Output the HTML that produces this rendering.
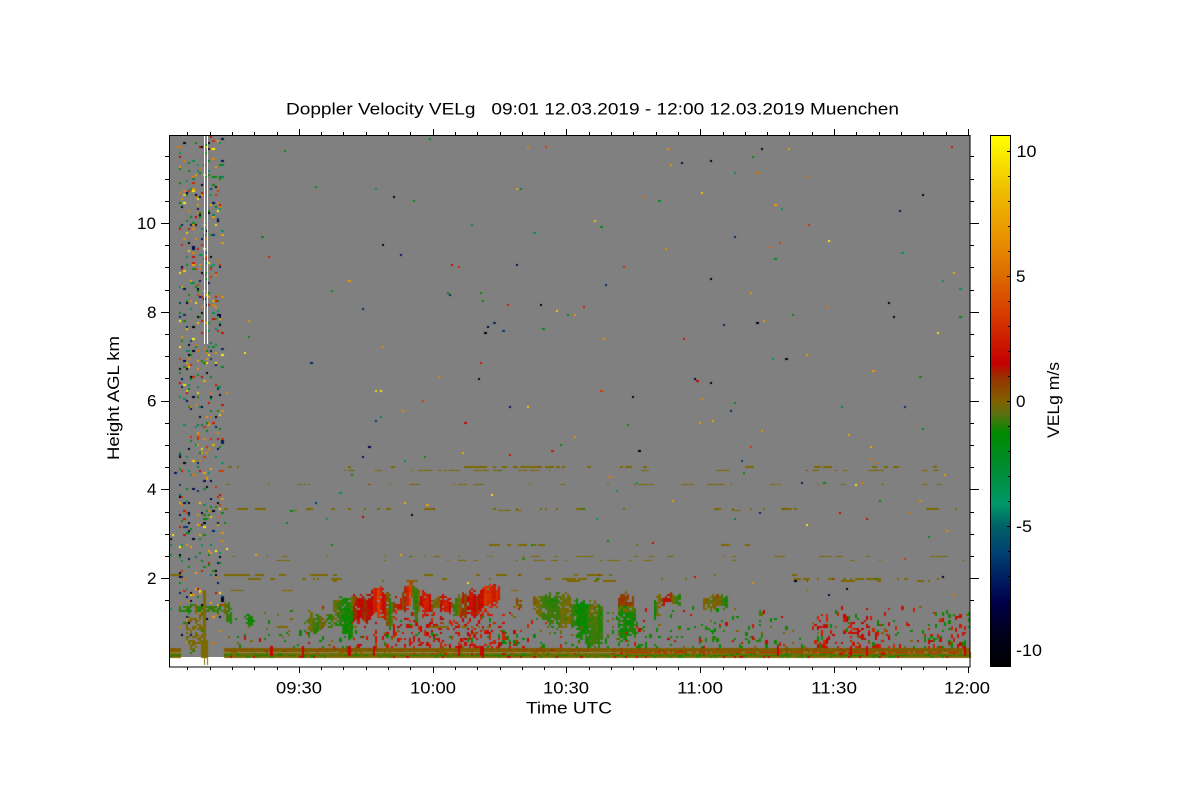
<!DOCTYPE html>
<html>
<head>
<meta charset="utf-8">
<title>Doppler Velocity VELg</title>
<style>
html,body{margin:0;padding:0;background:#fff;}
#w{position:relative;width:1200px;height:800px;overflow:hidden;background:#fff;}
#g{position:absolute;left:170px;top:136px;width:800px;height:521px;background:#808080;}
canvas{position:absolute;left:0;top:0;}
svg{position:absolute;left:0;top:0;}
text{font-family:"Liberation Sans",sans-serif;fill:#000;}
</style>
</head>
<body>
<div id="w">
<div id="g"></div>
<canvas id="c" width="1200" height="800"></canvas>
<svg id="s" width="1200" height="800" viewBox="0 0 1200 800">
<defs>
<linearGradient id="cb" x1="0" y1="0" x2="0" y2="1">
<stop offset="0" stop-color="#ffff00"/>
<stop offset="0.115" stop-color="#eeb800"/>
<stop offset="0.197" stop-color="#e89000"/>
<stop offset="0.265" stop-color="#dc6a00"/>
<stop offset="0.329" stop-color="#d84000"/>
<stop offset="0.429" stop-color="#c40000"/>
<stop offset="0.455" stop-color="#983000"/>
<stop offset="0.5" stop-color="#806000"/>
<stop offset="0.523" stop-color="#5f7010"/>
<stop offset="0.56" stop-color="#008a00"/>
<stop offset="0.625" stop-color="#008c30"/>
<stop offset="0.693" stop-color="#009868"/>
<stop offset="0.736" stop-color="#006068"/>
<stop offset="0.787" stop-color="#004070"/>
<stop offset="0.838" stop-color="#001a60"/>
<stop offset="0.881" stop-color="#000048"/>
<stop offset="0.938" stop-color="#00001c"/>
<stop offset="1" stop-color="#000000"/>
</linearGradient>
</defs>
<rect x="204" y="135" width="1" height="209" fill="#fff"/>
<rect x="207" y="135" width="1" height="209" fill="#fff"/>
<rect x="990.5" y="135.5" width="20" height="531" fill="url(#cb)" stroke="#000" stroke-width="1" shape-rendering="crispEdges"/>
<rect x="169.5" y="135.5" width="800.5" height="531.5" fill="none" stroke="#000" stroke-width="1" shape-rendering="crispEdges"/>
<g id="t" stroke="#000" stroke-width="1" shape-rendering="crispEdges"></g>

<text x="286" y="114.5" font-size="17" textLength="613" lengthAdjust="spacingAndGlyphs" xml:space="preserve">Doppler Velocity VELg   09:01 12.03.2019 - 12:00 12.03.2019 Muenchen</text>

<text x="276" y="693.5" font-size="16.5" textLength="46" lengthAdjust="spacingAndGlyphs">09:30</text>
<text x="410" y="693.5" font-size="16.5" textLength="46" lengthAdjust="spacingAndGlyphs">10:00</text>
<text x="543" y="693.5" font-size="16.5" textLength="46" lengthAdjust="spacingAndGlyphs">10:30</text>
<text x="677" y="693.5" font-size="16.5" textLength="46" lengthAdjust="spacingAndGlyphs">11:00</text>
<text x="811" y="693.5" font-size="16.5" textLength="46" lengthAdjust="spacingAndGlyphs">11:30</text>
<text x="944" y="693.5" font-size="16.5" textLength="46" lengthAdjust="spacingAndGlyphs">12:00</text>
<text x="526" y="713.5" font-size="17" textLength="86" lengthAdjust="spacingAndGlyphs">Time UTC</text>

<text x="137" y="229" font-size="16.5" textLength="19" lengthAdjust="spacingAndGlyphs">10</text>
<text x="147" y="318" font-size="16.5" textLength="9.5" lengthAdjust="spacingAndGlyphs">8</text>
<text x="147" y="406.5" font-size="16.5" textLength="9.5" lengthAdjust="spacingAndGlyphs">6</text>
<text x="147" y="495" font-size="16.5" textLength="9.5" lengthAdjust="spacingAndGlyphs">4</text>
<text x="147" y="584" font-size="16.5" textLength="9.5" lengthAdjust="spacingAndGlyphs">2</text>

<text transform="translate(119,460) rotate(-90)" font-size="17" textLength="124" lengthAdjust="spacingAndGlyphs">Height AGL km</text>
<text transform="translate(1059,438) rotate(-90)" font-size="17" textLength="76" lengthAdjust="spacingAndGlyphs">VELg m/s</text>

<text x="1016.5" y="157" font-size="16.5" textLength="20" lengthAdjust="spacingAndGlyphs">10</text>
<text x="1016" y="282" font-size="16.5" textLength="9.5" lengthAdjust="spacingAndGlyphs">5</text>
<text x="1016" y="407" font-size="16.5" textLength="9.5" lengthAdjust="spacingAndGlyphs">0</text>
<text x="1016" y="532" font-size="16.5" textLength="16" lengthAdjust="spacingAndGlyphs">-5</text>
<text x="1016" y="656" font-size="16.5" textLength="26" lengthAdjust="spacingAndGlyphs">-10</text>
</svg>
</div>
<script>
(function(){
var NS="http://www.w3.org/2000/svg",T=document.getElementById("t");
function L(a,b,c,d){var l=document.createElementNS(NS,"line");l.setAttribute("x1",a);l.setAttribute("y1",b);l.setAttribute("x2",c);l.setAttribute("y2",d);T.appendChild(l);}
var i,x,y;
for(i=0;i<36;i++){x=Math.round(187.3+22.3*i)+.5;var M=(i%6==5);
 L(x,135,x,M?129:132);L(x,667,x,M?673:670);}
for(i=-3;i<21;i++){y=Math.round(156.4+22.2*i)+.5;if(y<136||y>666)continue;var m=((i-3)%4==0);
 L(169,y,m?161:165,y);L(970,y,m?979:974,y);}
for(i=0;i<21;i++){y=151.5+25*i;L(1010,y,(i%5==0)?1007:1008,y);}

var s=20190312;
function R(){s|=0;s=s+0x6D2B79F5|0;var t=Math.imul(s^s>>>15,1|s);t=t+Math.imul(t^t>>>7,61|t)^t;return((t^t>>>14)>>>0)/4294967296;}
var C=document.getElementById("c").getContext("2d");
var st=[[10.6,255,255,0],[8.16,238,184,0],[6.44,232,144,0],[5,220,106,0],[3.64,216,64,0],[1.52,196,0,0],[.96,152,48,0],[.3,130,88,0],[0,124,106,0],[-.48,95,112,16],[-1.28,0,138,0],[-2.64,0,140,48],[-4.08,0,152,104],[-5,0,96,104],[-6.08,0,64,112],[-7.16,0,26,96],[-8.08,0,0,72],[-9.28,0,0,28],[-10.6,0,0,0]];
function col(v){
 if(v>=10.6)return"rgb(255,255,0)";
 for(var k=0;k<st.length-1;k++){if(v<=st[k][0]&&v>=st[k+1][0]){var a=st[k],b=st[k+1],f=(a[0]-v)/(a[0]-b[0]);
  return"rgb("+Math.round(a[1]+(b[1]-a[1])*f)+","+Math.round(a[2]+(b[2]-a[2])*f)+","+Math.round(a[3]+(b[3]-a[3])*f)+")";}}
 return"#000";
}
var DX=2.23;
function P(x,y,v,h){
 h=h||2;
 var n=Math.floor((x-170)/DX),xx=Math.round(170+n*DX),x2=Math.round(170+(n+1)*DX);
 var yy=136+2*Math.floor((y-136)/2);
 if(xx<170||xx>968||yy<136)return;
 C.fillStyle=col(v);C.fillRect(xx,yy,Math.min(x2,970)-xx,h);
}
function itp(tb,x,k){
 k=k||1;
 if(x<=tb[0][0])return tb[0][k];
 for(var j=0;j<tb.length-1;j++){if(x<=tb[j+1][0]){var f=(x-tb[j][0])/(tb[j+1][0]-tb[j][0]);return tb[j][k]+(tb[j+1][k]-tb[j][k])*f;}}
 return tb[tb.length-1][k];
}
function spk(){
 var r=R();
 if(r<.1)return 8.5+R()*2;
 if(r<.34)return 5+R()*2.6;
 if(r<.48)return 1.5+R()*2;
 if(r<.66)return -.9-R()*1.5;
 if(r<.76)return -3-R()*1.6;
 if(r<.9)return -6-R()*2;
 return -9-R()*1.5;
}
function band(y,segs,th,v0){
 th=th||2;
 segs.forEach(function(q){
  var x=q[0];
  while(x<q[1]){
   if(R()<q[2]){
    var len=1+Math.floor(R()*R()*(q[3]||9));
    for(var j=0;j<len&&x<q[1];j++){
     P(x,y,(v0===undefined?0:v0)+(R()<.05?.5:0)+(R()<.015?-1.2:0),th);
     x+=DX;
    }
   }
   x+=DX;
  }
 });
}
/* sparse field dots */
for(i=0;i<190;i++){P(226+R()*743,136+R()*470,spk(),2);}

/* faint horizontal layers */
band(467,[[225,262,.14],[340,362,.12],[385,425,.08],[458,565,.42,12],[570,615,.05],[622,648,.3],[650,700,.05],[735,765,.16],[805,835,.22],[840,945,.12]],2);
band(470,[[225,300,.06],[340,560,.2],[620,650,.12],[700,760,.05],[800,945,.08]],1);
band(484,[[225,420,.1,5],[420,640,.09,5],[640,725,.2,9],[725,960,.08,6]],1);
band(509,[[225,345,.12],[345,400,.06],[400,445,.14],[490,560,.14],[560,600,.05],[600,665,.1],[700,800,.1],[800,960,.06]],2);
band(511,[[262,345,.05],[400,440,.08],[500,530,.14],[710,740,.1]],1);
band(544,[[490,552,.22],[622,652,.18],[700,752,.14],[752,800,.03],[800,830,.07]],2);
band(557,[[225,300,.08,6],[300,480,.1,6],[480,760,.09],[760,970,.09]],1);
band(560,[[225,430,.05],[430,700,.1],[700,970,.07]],1);
band(574,[[225,262,.85,20],[262,285,.22],[300,345,.16],[420,445,.3],[445,470,.14],[470,510,.24,12],[510,620,.09],[620,760,.03],[790,830,.1]],2);
band(574,[[170,183,.9,20]],2);
band(578,[[240,300,.09],[300,345,.1],[345,390,.06],[410,470,.05],[490,540,.06],[540,625,.12],[625,660,.06],[660,695,.14],[760,800,.03],[795,880,.26],[890,940,.14]],2);
band(581,[[300,360,.07],[370,470,.06],[560,620,.1],[795,880,.14],[915,935,.22]],2,.1);
band(590,[[225,300,.1],[300,345,.03],[500,520,.1],[600,660,.04],[800,840,.03]],1);
band(600,[[240,290,.05],[335,350,.14]],2);

/* low clutter */
var rE=[[225,.003],[340,.012],[380,.14],[420,.2],[500,.24],[522,.04],[600,.015],[640,.03],[700,.02],[810,.015],[820,.32],[835,.06],[848,.26],[870,.18],[885,.2],[900,.025],[925,.05],[969,.18]];
var gE=[[225,.02],[300,.03],[340,.03],[500,.05],[600,.07],[730,.07],[800,.025],[900,.04],[930,.08],[969,.14]];
for(x=226;x<969;x+=DX){
 for(y=606;y<648;y+=2){
  var pf=.3+.7*(y-606)/42,r=R();
  if(r<itp(rE,x)*pf){P(x,y,1.4+R()*1.4,2+2*Math.floor(R()*2));}
  else if(r<(itp(rE,x)+itp(gE,x))*pf){P(x,y,-1-R()*.4,2+Math.floor(R()*2)*2);}
  else if(r<(itp(rE,x)+itp(gE,x)+.025)*pf){P(x,y,.2*R(),2);}
 }
}
band(627,[[225,340,.05],[340,500,.05]],2);

/* cloud routine */
function cloud(tb,vt,dens,jit,vf){
 var x0=tb[0][0],x1=tb[tb.length-1][0];
 dens=dens||.92;jit=jit===undefined?3:jit;
 for(var x=x0;x<x1;x+=DX){
  var t=itp(tb,x,1)+(R()-.5)*jit*2,b=itp(tb,x,2)+(R()-.5)*jit*2,cn=(R()-.5)*1.1,base=itp(vt,x);
  for(var y=t;y<b;y+=2){
   var d=Math.min(y-t,b-y)<4?dens-.18:dens;
   if(R()<d){
    var v=base+cn*(base>0?1:.3)+(R()-.5)*.6;
    if(base<-.4&&v>-.6)v=-.8;
    if(vf)v=vf(x,y,v);
    P(x,y,v,2);
   }
  }
 }
}
/* main red cloud */
cloud([[345,605,628],[350,595,622],[360,597,620],[368,596,622],[372,590,615],[380,589,615],[386,590,622],[391,597,632],[393,605,612],[400,600,612],[404,593,610],[408,580,610],[412,582,600],[416,590,625],[420,595,610],[425,592,612],[430,596,615],[433,600,612],[440,595,612],[447,597,610],[452,602,612],[456,600,616],[465,594,615],[472,592,615],[480,594,612],[488,585,610],[495,588,606],[500,590,604]],
 [[345,-1.1],[350,-.9],[352,.3],[360,2],[368,1],[375,2.4],[380,3.2],[386,1.6],[390,-1.1],[393,1],[400,2],[404,.3],[409,4],[412,.5],[416,-1.2],[420,1.5],[425,2.8],[430,1.5],[433,-.5],[438,.5],[444,2.4],[450,1.5],[455,-.8],[462,.5],[470,2.4],[478,1],[485,2.8],[490,3.3],[495,2.4],[500,2.8]],.95,2.5);
/* low left of main cloud */
cloud([[306,622,630],[312,616,632],[320,615,630],[326,617,632],[335,616,628]],[[306,-.9],[312,-.2],[318,-1],[324,.1],[330,-.8],[335,-.1]],.8,3);
cloud([[333,603,612],[340,600,630],[347,600,642],[353,612,640]],[[333,.1],[338,-1],[347,-1.2],[353,-1]],.9,3);
cloud([[352,598,606],[356,597,606]],[[352,.2],[356,.4]],.8,1);
/* mid clouds */
cloud([[517,600,608],[523,600,610]],[[517,.4],[523,.3]],.7,2);
cloud([[535,597,612],[545,597,625],[555,596,628],[565,595,632],[573,600,625],[580,605,640],[590,605,645],[600,603,648],[604,610,640]],
 [[535,.05],[545,-.5],[555,-.9],[563,-.1],[570,-.2],[575,-1],[585,-1.2],[592,-.6],[598,-.7],[604,-1]],.9,3.5);
cloud([[590,600,625],[598,598,630]],[[590,.2],[598,.15]],.5,3);
cloud([[620,597,642],[628,597,643],[636,604,640]],[[620,-1.1],[636,-1.1]],.9,5,function(x,y,v){return y<606?(.5+(R()*.5)):(y<612&&R()<.5?-.1:v);});
cloud([[654,600,622],[658,596,606],[666,594,604],[672,596,602],[680,595,606]],[[654,-1],[658,.3],[662,1.6],[668,1.4],[672,.1],[676,-.8],[680,-.9]],.9,2);
cloud([[703,598,610],[712,597,612],[720,595,606],[727,597,612]],[[703,.05],[708,-.4],[712,.1],[716,.5],[722,-.9],[727,-1.1]],.85,2);
cloud([[760,611,615],[766,611,616]],[[760,-1],[766,1.4]],.7,1);

/* speckle column */
for(x=181;x<224;x+=DX){
 var cd=.09+.04*R();
 for(y=136;y<644;y+=2){ if(R()<cd)P(x,y,spk(),2); }
}
for(y=136;y<644;y+=2){ if(R()<.012)P(170+R()*11,y,spk(),2); if(R()<.006)P(224+R()*4,y,spk(),2);}

/* left low features */
cloud([[180,607,612],[196,606,612],[204,608,612],[212,606,612],[223,606,612]],[[180,-1],[190,-.9],[196,-.2],[200,-.9],[223,-.8]],.9,1.2);
cloud([[224,602,616],[228,604,624],[232,612,626]],[[224,-.2],[228,-.9],[232,-1]],.9,2);
cloud([[245,617,622],[250,615,626],[256,618,624]],[[245,-1.1],[256,-1.1]],.9,1.5);
for(x=187;x<203;x+=DX){for(y=612;y<650;y+=2){if(R()<.34)P(x,y,R()*.08,2);}}
for(y=590;y<642;y+=2){P(205,y,0,2);}
for(y=640;y<659;y+=2){P(203,y,0,2);P(205,y,0,2);P(207,y,0,2);}
C.fillStyle=col(0);C.fillRect(204,659,1,6);C.fillRect(207,659,1,6);C.fillRect(204,659,4,2);

/* bottom bands */
function bottom(x0,x1){
 for(var x=x0;x<x1;x+=DX){
  var late=x>620;
  var rp=itp(rE,x)*.7+.03;
  for(var y=648;y<652;y+=2){P(x,y,R()<.1?.6:.15+R()*.15,2);}
  var n=Math.floor((x-170)/DX),xx=Math.round(170+n*DX),wd=Math.round(170+(n+1)*DX)-xx;
  C.fillStyle=R()<.85?"#8a8a58":"#7a6a00";C.fillRect(xx,652,wd,1);
  C.fillStyle=col(R()<.7?.02:-.4);C.fillRect(xx,653,wd,2);
  if(R()<rp){C.fillStyle=col(1.6+R());C.fillRect(xx,653,wd,1+Math.floor(R()*2));}
  if(late&&R()<.72){C.fillStyle="#d02a10";C.fillRect(xx,652,wd,1);}
  C.fillStyle=col(R()<.6?-1.1:-.3);C.fillRect(xx,655,wd,1);
  if(R()<.05){C.fillStyle=col(-1);C.fillRect(xx,653,wd,2);}
  C.fillStyle=col(R()<.78?0:(R()<.6?-1:1.5));C.fillRect(xx,656,wd,2);
  if(R()<rp*.3){C.fillStyle=col(1.7);C.fillRect(xx,646,wd,10);}
 }
}
bottom(225,970);
bottom(170,182);
for(x=182;x<225;x+=DX){if(R()<.22)P(x,648+R()*8,R()<.5?0:-1,2);}
C.clearRect(170,658,800,9);
C.fillStyle=col(0);C.fillRect(204,658,1,7);C.fillRect(207,658,1,7);
})();
</script>
</body>
</html>
